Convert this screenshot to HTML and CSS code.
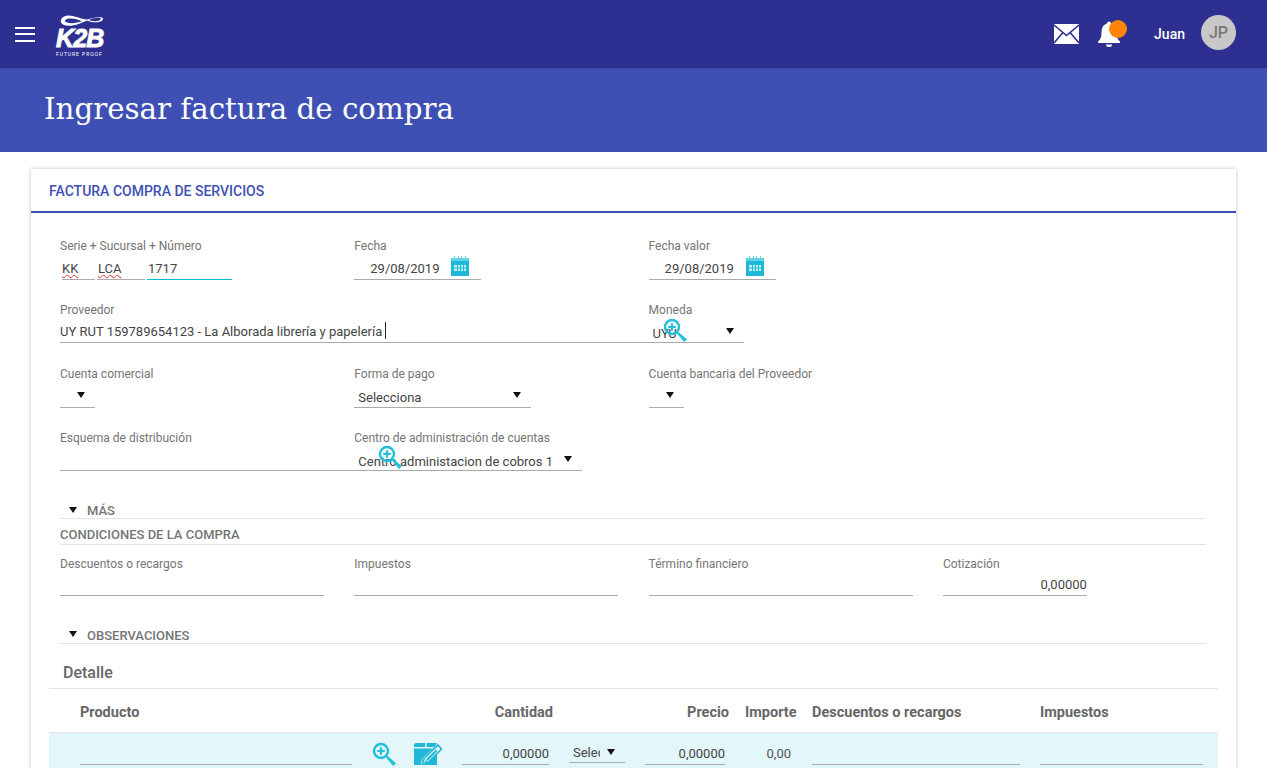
FILE: index.html
```html
<!DOCTYPE html>
<html lang="es">
<head>
    <meta charset="UTF-8">
    <meta name="viewport" content="width=device-width, initial-scale=1.0">
    <title>Ingresar factura de compra</title>
    <link rel="stylesheet" href="styles.css">
</head>
<body>
<svg class="sprites" width="0" height="0">
    <symbol id="icon-search" viewBox="0 0 24 24">
        <circle cx="9" cy="9" r="7" fill="none" stroke="#1fc0db" stroke-width="2.400"/>
        <path d="M9 5.200v7.600M5.200 9h7.600" stroke="#1fc0db" stroke-width="2.200" fill="none"/>
        <path d="M13.800 15.200l1.400-1.400 8.800 7.400-2.800 2.800z" fill="#1fc0db"/>
    </symbol>
    <symbol id="icon-calendar" viewBox="0 0 18 20">
        <path d="M3 0h1v3H3zM7 0h1v3H7zM10 0h1v3h-1zM14 0h1v3h-1z" fill="#5fd3e4"/>
        <path d="M0 2h18v3H0z" fill="#5fd3e4"/>
        <path d="M0 5h18v15H0z" fill="#1fb8d6"/>
        <path d="M3 9h12v6H3z" fill="#bfeef5"/>
        <path d="M6 9h1v6H6zM9 9h1v6H9zM12 9h1v6h-1zM3 11.500h12v1H3z" fill="#1fb8d6"/>
    </symbol>
</svg>

<div class="page">
    <header class="topbar">
        <div class="menu-btn"><span></span><span></span><span></span></div>
        <div class="logo">
            <svg class="logo-swoosh" width="44" height="12" viewBox="0 0 44 12">
                <path d="M8 .5C14 .2 20 4 27 4.500 32 3 38 1.500 42 2.500c2 1 1 3.500-3 4.500-4 .8-9 .2-12-1.500C21 8 16 11 8 10.800 3 10.500.3 8 .8 5.500 1.500 2.500 4 .8 8 .5z" fill="#fff"/>
                <path d="M9 3.500C13 3 18 4.500 22 6 18 7.800 13 8.500 9 8 6 7.500 4.500 6.500 5 5.500 5.500 4.500 7 3.800 9 3.500z" fill="#2d3091"/>
                <path d="M29 5c3-1.500 8-2.500 11-2 1.500.5 1 2-1.500 2.800C35 6.500 31 6 29 5z" fill="#2d3091"/>
            </svg>
            <div class="logo-name">K2B</div>
            <div class="logo-tag">FUTURE PROOF</div>
        </div>
        <div class="topbar-right">
            <svg class="mail-icon" width="25" height="20" viewBox="0 0 25 20">
                <path d="M0 0h25v20H0z" fill="#fff"/>
                <path d="M0 1l12.500 10.500L25 1M0 19l8.500-10M25 19l-8.500-10" fill="none" stroke="#2d3091" stroke-width="1.600"/>
            </svg>
            <div class="bell">
                <svg width="24" height="27" viewBox="0 0 24 27">
                    <path d="M10 2.500a2 2 0 0 1 4 0C18.500 4 19.500 8 19.500 12c0 4 1 6.500 3.500 8.500v1.500H1v-1.500C3.500 18.500 4.500 16 4.500 12c0-4 1-8 5.500-9.500z" fill="#fff"/>
                    <path d="M9 23.500h6a3 2.500 0 0 1-6 0z" fill="#fff"/>
                </svg>
                <span class="bell-dot"></span>
            </div>
            <span class="user-name">Juan</span>
            <div class="avatar">JP</div>
        </div>
    </header>

    <div class="title-band">
        <h1>Ingresar factura de compra</h1>
    </div>

    <section class="card">
        <div class="card-head">FACTURA COMPRA DE SERVICIOS</div>

        <div class="form-row row-tall">
            <div class="col">
                <label>Serie + Sucursal + Número</label>
                <div class="serie-group">
                    <div class="ctl w33 typo"><span>KK</span></div>
                    <div class="ctl w48 typo"><span>LCA</span></div>
                    <div class="ctl w85 focused">1717</div>
                </div>
            </div>
            <div class="col">
                <label>Fecha</label>
                <div class="ctl w127 date">29/08/2019
                    <svg class="cal"><use href="#icon-calendar"/></svg>
                </div>
            </div>
            <div class="col">
                <label>Fecha valor</label>
                <div class="ctl w127 date">29/08/2019
                    <svg class="cal"><use href="#icon-calendar"/></svg>
                </div>
            </div>
        </div>

        <div class="form-row">
            <div class="col col-wide">
                <label>Proveedor</label>
                <div class="ctl proveedor">UY RUT 159789654123 - La Alborada librería y papelería<i class="cursor"></i></div>
            </div>
            <div class="col">
                <label>Moneda</label>
                <div class="ctl select moneda">UYU<span class="caret"></span>
                    <svg class="lookup"><use href="#icon-search"/></svg>
                </div>
            </div>
        </div>

        <div class="form-row row-tall">
            <div class="col">
                <label>Cuenta comercial</label>
                <div class="ctl select w35"><span class="caret"></span></div>
            </div>
            <div class="col">
                <label>Forma de pago</label>
                <div class="ctl select w177">Selecciona<span class="caret"></span></div>
            </div>
            <div class="col">
                <label>Cuenta bancaria del Proveedor</label>
                <div class="ctl select w35"><span class="caret"></span></div>
            </div>
        </div>

        <div class="form-row">
            <div class="col">
                <label>Esquema de distribución</label>
                <div class="ctl esquema"></div>
            </div>
            <div class="col">
                <label>Centro de administración de cuentas</label>
                <div class="ctl select centro">Centro administacion de cobros 1<span class="caret"></span>
                    <svg class="lookup"><use href="#icon-search"/></svg>
                </div>
            </div>
        </div>

        <div class="section-title mas"><span class="caret"></span>MÁS</div>
        <div class="section-title plain">CONDICIONES DE LA COMPRA</div>

        <div class="form-row four">
            <div class="col">
                <label>Descuentos o recargos</label>
                <div class="ctl w264"></div>
            </div>
            <div class="col">
                <label>Impuestos</label>
                <div class="ctl w264"></div>
            </div>
            <div class="col">
                <label>Término financiero</label>
                <div class="ctl w264"></div>
            </div>
            <div class="col">
                <label>Cotización</label>
                <div class="ctl w144 num">0,00000</div>
            </div>
        </div>

        <div class="section-title obs"><span class="caret"></span>OBSERVACIONES</div>

        <h2 class="detalle">Detalle</h2>

        <div class="grid-head">
            <div>Producto</div>
            <div></div>
            <div class="right-a">Cantidad</div>
            <div></div>
            <div class="right-a">Precio</div>
            <div class="importe-head">Importe</div>
            <div>Descuentos o recargos</div>
            <div>Impuestos</div>
        </div>
        <div class="grid-row">
            <div class="ctl"></div>
            <div class="row-icons">
                <svg class="row-search"><use href="#icon-search"/></svg>
                <svg class="row-edit" viewBox="0 0 28 22">
                    <path d="M2 0h9v4H0V2a2 2 0 0 1 2-2zM12.500 0H23l-3 4h-7.500z" fill="#1fb8d6"/>
                    <path d="M0 5.500h18.500L8 16l-1.500 6H0zM23 8.500V22H10l1-4.500 3-1z" fill="#1fb8d6"/>
                    <path d="M23.500 2l4 4L13 20.500l-5 1.500 1.500-5.500z" fill="none" stroke="#1fb8d6" stroke-width="1.800"/>
                    <path d="M24 3.500l2.500 2.500-13 13-3-3z" fill="#e3f6f9"/>
                    <path d="M22 6.500l1.500 1.500-10 10-1.500-1.500z" fill="#1fb8d6"/>
                </svg>
            </div>
            <div class="ctl num">0,00000</div>
            <div class="ctl select row-select"><span class="clip">Selecciona</span><span class="caret"></span></div>
            <div class="ctl num">0,00000</div>
            <div class="importe-val">0,00</div>
            <div class="ctl w208"></div>
            <div class="ctl"></div>
        </div>
    </section>
</div>
</body>
</html>
```

FILE: styles.css
```css
html, body {
    margin: 0;
    padding: 0;
    height: 768px;
    overflow: hidden;
    background-color: #fff;
}

body {
    font-family: Roboto, Arial, sans-serif;
    font-size: 13px;
    color: #444;
}

.sprites {
    display: block;
    height: 0;
}

.page {
    width: 1267px;
    height: 768px;
    overflow: hidden;
    background-color: #fff;
}

/* top bar */
.topbar {
    display: flex;
    align-items: center;
    height: 68px;
    background-color: #2d3091;
    color: #fff;
}

.menu-btn {
    display: flex;
    flex-direction: column;
    gap: 4.500px;
    width: 20px;
    margin-left: 15px;
}

.menu-btn span {
    display: block;
    height: 2px;
    background-color: #fff;
}

.logo {
    position: relative;
    width: 50px;
    height: 42px;
    margin-left: 21px;
    margin-top: 4px;
}

.logo-swoosh {
    position: absolute;
    left: 4px;
    top: 0;
}

.logo-name {
    position: absolute;
    left: 0;
    top: 11px;
    font-family: "Liberation Sans", Arial, sans-serif;
    font-size: 25px;
    line-height: 25px;
    font-weight: bold;
    font-style: italic;
    letter-spacing: -0.800px;
    -webkit-text-stroke: 0.900px #fff;
}

.logo-tag {
    position: absolute;
    left: 0;
    top: 36px;
    font-size: 5px;
    line-height: 6px;
    letter-spacing: 0.950px;
    white-space: nowrap;
}

.topbar-right {
    display: flex;
    align-items: center;
    margin-left: auto;
    padding-right: 31px;
}

.mail-icon {
    display: block;
    margin-right: 18px;
}

.bell {
    position: relative;
    width: 24px;
    height: 27px;
    margin-right: 33px;
}

.bell svg {
    display: block;
}

.bell-dot {
    position: absolute;
    left: 12px;
    top: -1px;
    width: 18px;
    height: 18px;
    border-radius: 50%;
    background-color: #ff8508;
}

.user-name {
    font-size: 14px;
    font-weight: 500;
    margin-right: 16px;
}

.avatar {
    width: 35px;
    height: 35px;
    margin-top: -3px;
    line-height: 35px;
    border-radius: 50%;
    background-color: #c8c8c8;
    color: #777;
    font-size: 16px;
    font-weight: 500;
    text-align: center;
}

/* title */
.title-band {
    height: 84px;
    background-color: #3e50b4;
    border-top: 1px solid #3a4aab;
    box-sizing: border-box;
}

.title-band h1 {
    margin: 0;
    padding: 20px 0 0 44px;
    font-family: "Roboto Slab", "DejaVu Serif", serif;
    font-size: 29.300px;
    line-height: 40px;
    font-weight: normal;
    color: #fff;
}

/* card */
.card {
    width: 1205px;
    margin: 17px 0 0 31px;
    box-shadow: 0 0 4px rgba(0, 0, 0, 0.25);
    height: 640px;
    box-sizing: border-box;
}

.card-head {
    height: 42px;
    line-height: 44px;
    padding-left: 18px;
    border-bottom: 2px solid #3e50b4;
    color: #3e50b4;
    font-size: 14px;
    font-weight: 500;
    margin-bottom: 24px;
}

.form-row {
    display: grid;
    grid-template-columns: 294.300px 294.300px 294.300px 1fr;
    height: 64px;
    padding-left: 29px;
}

.form-row .col-wide {
    grid-column: span 2;
}

.col label {
    display: block;
    height: 17px;
    line-height: 19px;
    font-size: 12px;
    color: #757575;
}

.ctl {
    position: relative;
    box-sizing: border-box;
    height: 25px;
    padding-top: 5px;
    line-height: 20px;
    font-size: 13px;
    color: #444;
    border-bottom: 1px solid #aaa;
    white-space: nowrap;
}

.row-tall .ctl {
    height: 26px;
}

.serie-group {
    display: flex;
    gap: 2px;
    padding-left: 2px;
}

.w33 { width: 33px; padding-left: 0; }
.w48 { width: 48px; padding-left: 1px; }
.w85 { width: 85px; padding-left: 1px; }
.w35 { width: 35px; }
.w127 { width: 127px; }
.w144 { width: 144px; }
.w177 { width: 177px; }
.w208 { width: 208px; }
.w264 { width: 264px; }

.typo span {
    text-decoration: underline wavy #d33;
    text-decoration-thickness: 1px;
}

.focused {
    border-bottom-color: #00bcd4;
}

.date {
    padding-left: 16px;
}

.cal {
    position: absolute;
    left: 97px;
    top: 2px;
    width: 18px;
    height: 20px;
}

.proveedor {
    width: 600px;
    padding-top: 4px;
}

.cursor {
    display: inline-block;
    width: 1px;
    height: 17px;
    margin-left: 3px;
    vertical-align: -3px;
    background-color: #222;
}

.esquema {
    width: 300px;
}

.select {
    padding-left: 4px;
    padding-top: 6px;
}

.caret {
    position: absolute;
    right: 10px;
    top: 10px;
    width: 0;
    height: 0;
    border-left: 4.500px solid transparent;
    border-right: 4.500px solid transparent;
    border-top: 6px solid #111;
}

.moneda {
    width: 95px;
}

.centro {
    width: 228px;
}

.lookup {
    position: absolute;
    left: 14px;
    top: 0;
    width: 24px;
    height: 24px;
}

.centro .lookup {
    left: 24px;
    top: -1px;
}

.num {
    text-align: right;
}

.section-title {
    position: relative;
    box-sizing: border-box;
    margin-left: 29px;
    border-bottom: 1px solid #e4e4e4;
    font-size: 13px;
    font-weight: 500;
    color: #757575;
    line-height: 16px;
}

.section-title .caret {
    left: 9px;
    right: auto;
    top: 4px;
}

.mas {
    width: 1145px;
    margin-top: 10px;
    padding: 0 0 0 27px;
    height: 16px;
}

.plain {
    width: 1146px;
    padding-top: 8px;
    height: 26px;
}

.four {
    margin-top: 10px;
    height: 64px;
}

.four .ctl {
    height: 24px;
    padding-top: 3px;
}

.obs {
    width: 1146px;
    margin-top: 8px;
    padding-left: 27px;
    height: 17px;
    line-height: 18px;
}

.detalle {
    margin: 0 18px;
    box-sizing: border-box;
    height: 45px;
    padding: 19px 0 0 14px;
    border-bottom: 1px solid #e4e4e4;
    font-size: 16px;
    line-height: 20px;
    font-weight: 500;
    color: #666;
}

.grid-head,
.grid-row {
    display: grid;
    grid-template-columns: 272px 110px 87px 96px 80px 87px 228px 163px;
    margin: 0 18px;
    padding-left: 31px;
}

.grid-head {
    height: 44px;
    line-height: 47px;
    box-sizing: border-box;
    border-bottom: 1px solid #e4e4e4;
    font-size: 14.500px;
    font-weight: 700;
    color: #666;
}

.right-a {
    text-align: right;
    margin-right: -4px;
    white-space: nowrap;
}

.importe-head {
    padding-left: 20px;
}

.grid-row {
    height: 40px;
    padding-top: 7px;
    background-color: #e3f6f9;
    box-sizing: border-box;
}

.grid-row .ctl {
    padding-top: 4px;
}

.row-icons {
    position: relative;
}

.row-search {
    position: absolute;
    left: 20px;
    top: 2px;
    width: 24px;
    height: 24px;
}

.row-edit {
    position: absolute;
    left: 62px;
    top: 3px;
    width: 28px;
    height: 22px;
}

.grid-row .row-select {
    width: 56px;
    margin-left: 20px;
    height: 23px;
    padding-top: 3px;
}

.clip {
    display: block;
    width: 27px;
    overflow: hidden;
}

.row-select .caret {
    right: 10px;
    top: 9px;
}

.importe-val {
    text-align: right;
    padding: 4px 21px 0 0;
    line-height: 20px;
    color: #555;
}
```
